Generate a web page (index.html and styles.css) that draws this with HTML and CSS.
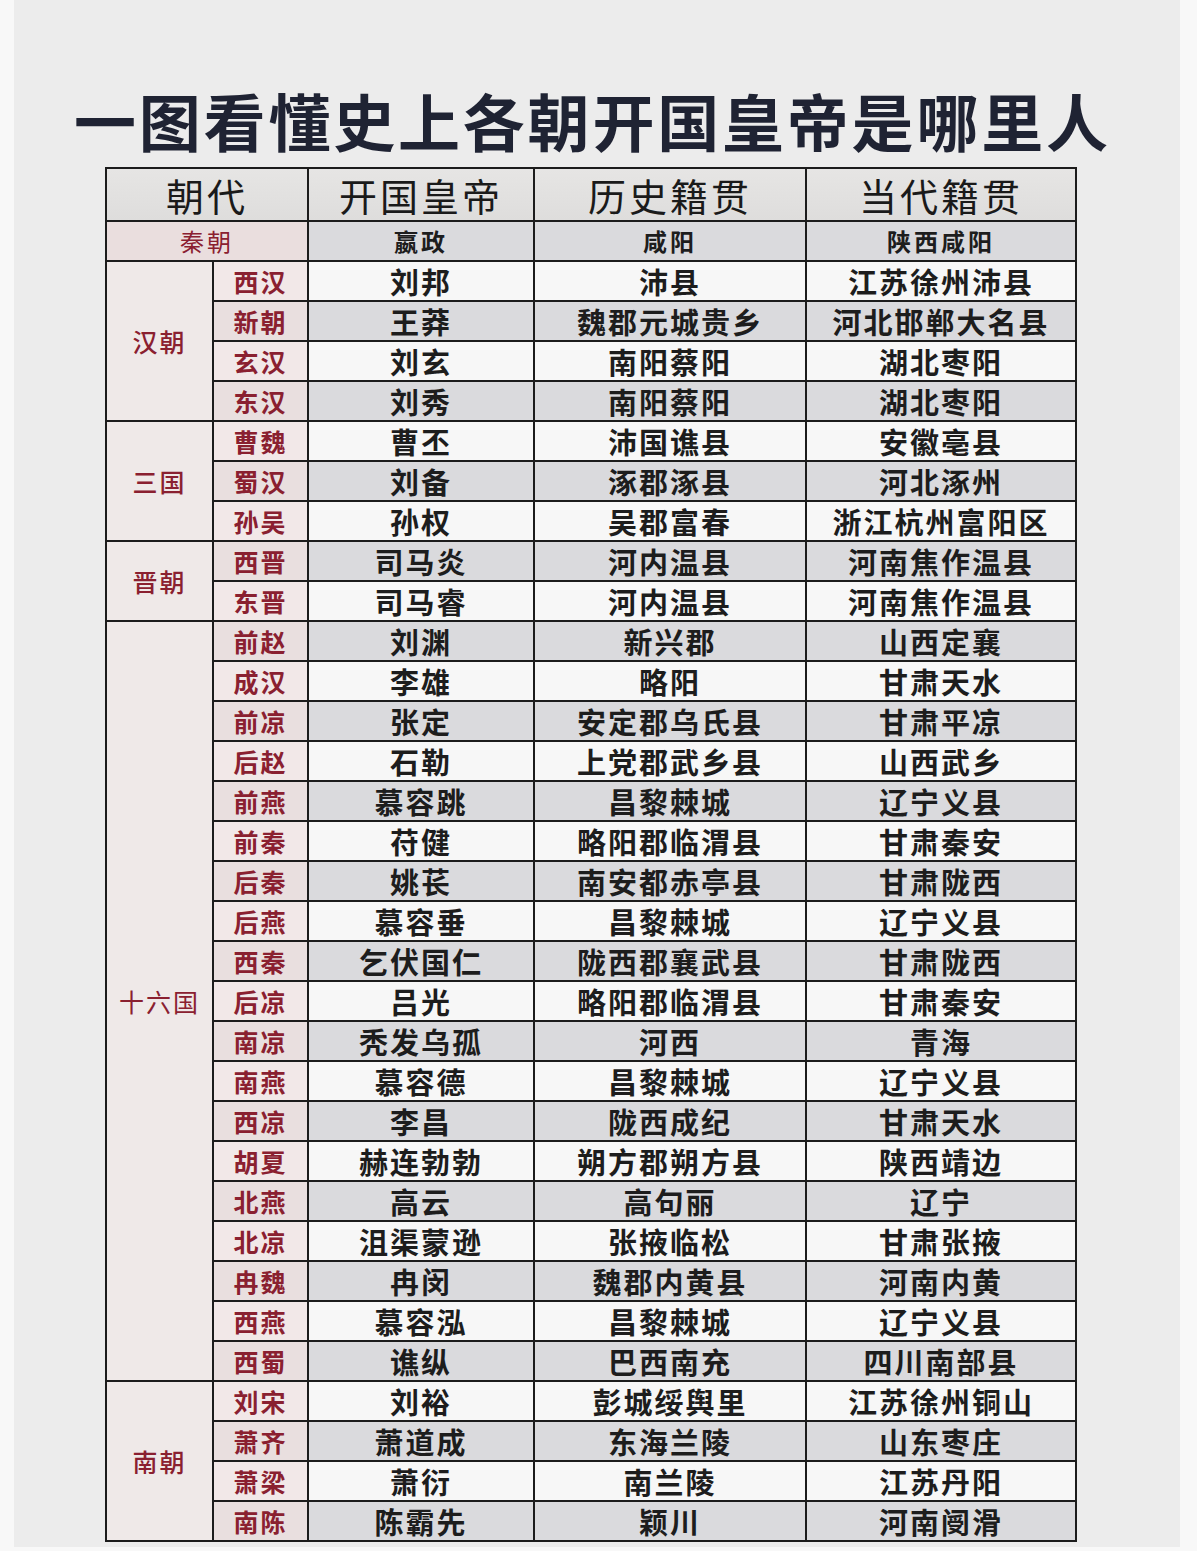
FILE: index.html
```html
<!DOCTYPE html>
<html lang="zh">
<head>
<meta charset="utf-8">
<title>一图看懂史上各朝开国皇帝是哪里人</title>
<link rel="stylesheet" href="styles.css">
</head>
<body>
<div class="panel">
  <h1 class="title">一图看懂史上各朝开国皇帝是哪里人</h1>
  <table class="tbl">
    <colgroup>
      <col class="c1"><col class="c2"><col class="c3"><col class="c4"><col class="c5">
    </colgroup>
    <thead>
      <tr class="head"><th colspan="2">朝代</th><th>开国皇帝</th><th>历史籍贯</th><th>当代籍贯</th></tr>
    </thead>
    <tbody>
      <tr class="g first"><td colspan="2" class="dyn">秦朝</td><td>嬴政</td><td>咸阳</td><td>陕西咸阳</td></tr>
      <tr class="w"><td rowspan="4" class="grp">汉朝</td><td class="sub">西汉</td><td>刘邦</td><td>沛县</td><td>江苏徐州沛县</td></tr>
      <tr class="g"><td class="sub">新朝</td><td>王莽</td><td>魏郡元城贵乡</td><td>河北邯郸大名县</td></tr>
      <tr class="w"><td class="sub">玄汉</td><td>刘玄</td><td>南阳蔡阳</td><td>湖北枣阳</td></tr>
      <tr class="g"><td class="sub">东汉</td><td>刘秀</td><td>南阳蔡阳</td><td>湖北枣阳</td></tr>
      <tr class="w"><td rowspan="3" class="grp">三国</td><td class="sub">曹魏</td><td>曹丕</td><td>沛国谯县</td><td>安徽亳县</td></tr>
      <tr class="g"><td class="sub">蜀汉</td><td>刘备</td><td>涿郡涿县</td><td>河北涿州</td></tr>
      <tr class="w"><td class="sub">孙吴</td><td>孙权</td><td>吴郡富春</td><td>浙江杭州富阳区</td></tr>
      <tr class="g"><td rowspan="2" class="grp">晋朝</td><td class="sub">西晋</td><td>司马炎</td><td>河内温县</td><td>河南焦作温县</td></tr>
      <tr class="w"><td class="sub">东晋</td><td>司马睿</td><td>河内温县</td><td>河南焦作温县</td></tr>
      <tr class="g"><td rowspan="19" class="grp light">十六国</td><td class="sub">前赵</td><td>刘渊</td><td>新兴郡</td><td>山西定襄</td></tr>
      <tr class="w"><td class="sub">成汉</td><td>李雄</td><td>略阳</td><td>甘肃天水</td></tr>
      <tr class="g"><td class="sub">前凉</td><td>张定</td><td>安定郡乌氏县</td><td>甘肃平凉</td></tr>
      <tr class="w"><td class="sub">后赵</td><td>石勒</td><td>上党郡武乡县</td><td>山西武乡</td></tr>
      <tr class="g"><td class="sub">前燕</td><td>慕容跳</td><td>昌黎棘城</td><td>辽宁义县</td></tr>
      <tr class="w"><td class="sub">前秦</td><td>苻健</td><td>略阳郡临渭县</td><td>甘肃秦安</td></tr>
      <tr class="g"><td class="sub">后秦</td><td>姚苌</td><td>南安都赤亭县</td><td>甘肃陇西</td></tr>
      <tr class="w"><td class="sub">后燕</td><td>慕容垂</td><td>昌黎棘城</td><td>辽宁义县</td></tr>
      <tr class="g"><td class="sub">西秦</td><td>乞伏国仁</td><td>陇西郡襄武县</td><td>甘肃陇西</td></tr>
      <tr class="w"><td class="sub">后凉</td><td>吕光</td><td>略阳郡临渭县</td><td>甘肃秦安</td></tr>
      <tr class="g"><td class="sub">南凉</td><td>秃发乌孤</td><td>河西</td><td>青海</td></tr>
      <tr class="w"><td class="sub">南燕</td><td>慕容德</td><td>昌黎棘城</td><td>辽宁义县</td></tr>
      <tr class="g"><td class="sub">西凉</td><td>李昌</td><td>陇西成纪</td><td>甘肃天水</td></tr>
      <tr class="w"><td class="sub">胡夏</td><td>赫连勃勃</td><td>朔方郡朔方县</td><td>陕西靖边</td></tr>
      <tr class="g"><td class="sub">北燕</td><td>高云</td><td>高句丽</td><td>辽宁</td></tr>
      <tr class="w"><td class="sub">北凉</td><td>沮渠蒙逊</td><td>张掖临松</td><td>甘肃张掖</td></tr>
      <tr class="g"><td class="sub">冉魏</td><td>冉闵</td><td>魏郡内黄县</td><td>河南内黄</td></tr>
      <tr class="w"><td class="sub">西燕</td><td>慕容泓</td><td>昌黎棘城</td><td>辽宁义县</td></tr>
      <tr class="g"><td class="sub">西蜀</td><td>谯纵</td><td>巴西南充</td><td>四川南部县</td></tr>
      <tr class="w"><td rowspan="4" class="grp">南朝</td><td class="sub">刘宋</td><td>刘裕</td><td>彭城绥舆里</td><td>江苏徐州铜山</td></tr>
      <tr class="g"><td class="sub">萧齐</td><td>萧道成</td><td>东海兰陵</td><td>山东枣庄</td></tr>
      <tr class="w"><td class="sub">萧梁</td><td>萧衍</td><td>南兰陵</td><td>江苏丹阳</td></tr>
      <tr class="g"><td class="sub">南陈</td><td>陈霸先</td><td>颖川</td><td>河南阌滑</td></tr>
    </tbody>
  </table>
</div>
</body>
</html>
```

FILE: styles.css
```css
html, body {
  margin: 0;
  padding: 0;
}
body {
  background: #f8f8f8;
  width: 1197px;
  height: 1551px;
  overflow: hidden;
  font-family: "Noto Sans CJK SC", "Noto Sans", sans-serif;
}
.panel {
  margin-left: 14px;
  width: 1166px;
  height: 1547px;
  background: #ececec;
  padding-top: 85px;
  box-sizing: border-box;
}
.title {
  margin: 0 0 12px 0;
  font-size: 62px;
  line-height: 70px;
  height: 70px;
  font-weight: 700;
  color: #1f2333;
  letter-spacing: 2.8px;
  text-align: left;
  padding-left: 60px;
  white-space: nowrap;
}
.tbl {
  margin-left: 91px;
  border-collapse: collapse;
  table-layout: fixed;
  width: 970px;
}
.c1 { width: 107px; }
.c2 { width: 95px; }
.c3 { width: 226px; }
.c4 { width: 272px; }
.c5 { width: 270px; }
.tbl th, .tbl td {
  border: 2px solid #1c1c1c;
  padding: 0;
  text-align: center;
  vertical-align: middle;
  white-space: nowrap;
  overflow: hidden;
}
.head th {
  height: 51px;
  font-size: 38px;
  font-weight: 400;
  color: #1a1a1a;
  letter-spacing: 3px;
  background: linear-gradient(#e6e5e4, #dedddc);
  line-height: 51px;
}
.tbl td {
  height: 38px;
  line-height: 38px;
  font-size: 29px;
  font-weight: 700;
  color: #1d1d1d;
  letter-spacing: 2px;
}
.tbl tr.g td { background: #dadadd; }
.tbl tr.w td { background: #f7f7f7; }
.tbl tr.first td {
  font-size: 24px;
  letter-spacing: 3px;
  font-weight: 600;
}
.tbl td.sub {
  background: #efe3e3;
  color: #8a2030;
  font-size: 25px;
  letter-spacing: 2px;
  font-weight: 600;
}
.tbl tr.g td.sub { background: #e9dfdf; }
.tbl tr.w td.sub { background: #f2e8e8; }
.tbl td.grp {
  background: #efe9e8 !important;
  color: #8a2030;
  font-size: 25px;
  letter-spacing: 2px;
  font-weight: 500;
}
.tbl td.grp.light { font-weight: 400; }
.tbl tr.first td.dyn {
  background: #eadede;
  color: #8a2030;
  font-weight: 400;
}
```
